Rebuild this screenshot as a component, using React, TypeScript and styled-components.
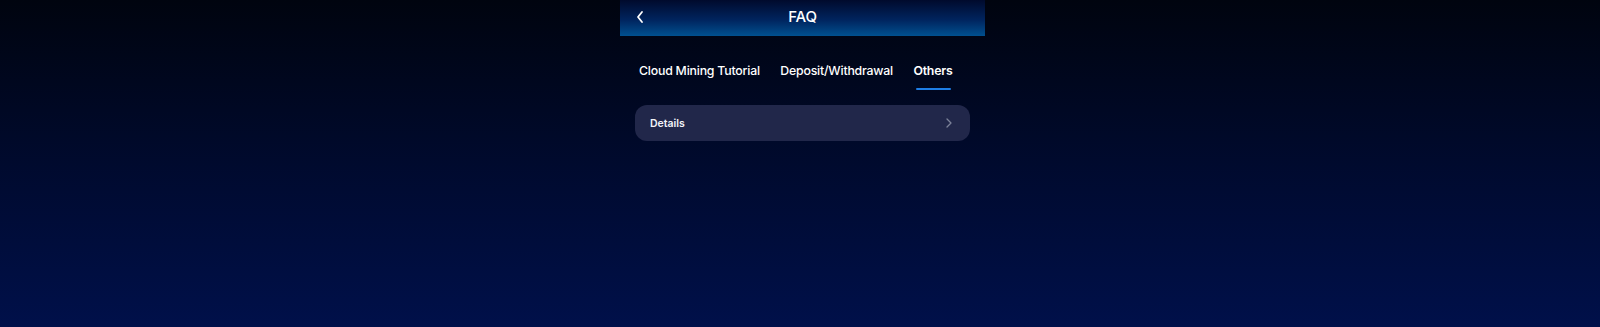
import React, { useState } from 'react'
import styled, { createGlobalStyle } from 'styled-components'

const GlobalStyle = createGlobalStyle`
  html, body {
    margin: 0;
    padding: 0;
    height: 100%;
  }
  body {
    background: linear-gradient(180deg, #00040f 0%, #000a2e 50%, #00104a 100%);
    font-family: Inter, 'Noto Sans', sans-serif;
    color: #fff;
  }
  #root {
    min-height: 100vh;
  }
`

const Page = styled.div`
  min-height: 100vh;
  display: flex;
  justify-content: center;
  padding-left: 5px;
`

const Column = styled.div`
  width: 365px;
  display: flex;
  flex-direction: column;
`

const Header = styled.header`
  height: 36px;
  display: grid;
  grid-template-columns: 40px 1fr 40px;
  align-items: center;
  padding-bottom: 3px;
  box-sizing: border-box;
  background: linear-gradient(180deg, #000a2c 0%, #00245e 55%, #00508f 100%);
`

const BackButton = styled.button`
  border: none;
  background: none;
  padding: 0 0 0 15px;
  display: flex;
  align-items: center;
  color: #fff;
  cursor: pointer;
`

const Title = styled.h1`
  margin: 0;
  text-align: center;
  font-size: 15px;
  font-weight: 500;
  letter-spacing: -0.2px;
`

const Tabs = styled.nav`
  display: flex;
  gap: 20.5px;
  padding: 27px 0 0 19px;
`

const Tab = styled.button<{ $active: boolean }>`
  border: none;
  background: none;
  padding: 0 0 12px;
  position: relative;
  color: #fff;
  font-family: Inter, 'Noto Sans', sans-serif;
  font-size: 12.3px;
  font-weight: ${p => (p.$active ? 600 : 500)};
  letter-spacing: -0.2px;
  cursor: pointer;

  &::after {
    content: '';
    position: absolute;
    left: 3px;
    right: 2px;
    bottom: 0;
    height: 2px;
    border-radius: 1px;
    background: ${p => (p.$active ? '#1e7ee6' : 'transparent')};
  }
`

const List = styled.div`
  padding: 15px 15px 0;
  display: flex;
  flex-direction: column;
  gap: 10px;
`

const Row = styled.div`
  height: 36px;
  border-radius: 12px;
  background: #21274a;
  display: flex;
  align-items: center;
  justify-content: space-between;
  padding: 0 17px 0 15px;
  font-size: 10.5px;
  font-weight: 600;
  color: #f2f3f8;
`

const tabs = ['Cloud Mining Tutorial', 'Deposit/Withdrawal', 'Others']

export default function App() {
  const [active, setActive] = useState(2)

  return (
    <>
      <GlobalStyle />
      <Page>
        <Column>
          <Header>
            <BackButton aria-label="back">
              <svg width="10" height="14" viewBox="0 0 10 14" fill="none">
                <path d="M7 2L3 7l4 5" stroke="#fff" strokeWidth="1.8" strokeLinecap="round" strokeLinejoin="round" />
              </svg>
            </BackButton>
            <Title>FAQ</Title>
            <span />
          </Header>

          <Tabs>
            {tabs.map((t, i) => (
              <Tab key={t} $active={i === active} onClick={() => setActive(i)}>
                {t}
              </Tab>
            ))}
          </Tabs>

          <List>
            <Row>
              Details
              <svg width="8" height="12" viewBox="0 0 8 12" fill="none">
                <path d="M2 2l4 4-4 4" stroke="#7c8299" strokeWidth="1.3" strokeLinecap="round" strokeLinejoin="round" />
              </svg>
            </Row>
          </List>
        </Column>
      </Page>
    </>
  )
}
